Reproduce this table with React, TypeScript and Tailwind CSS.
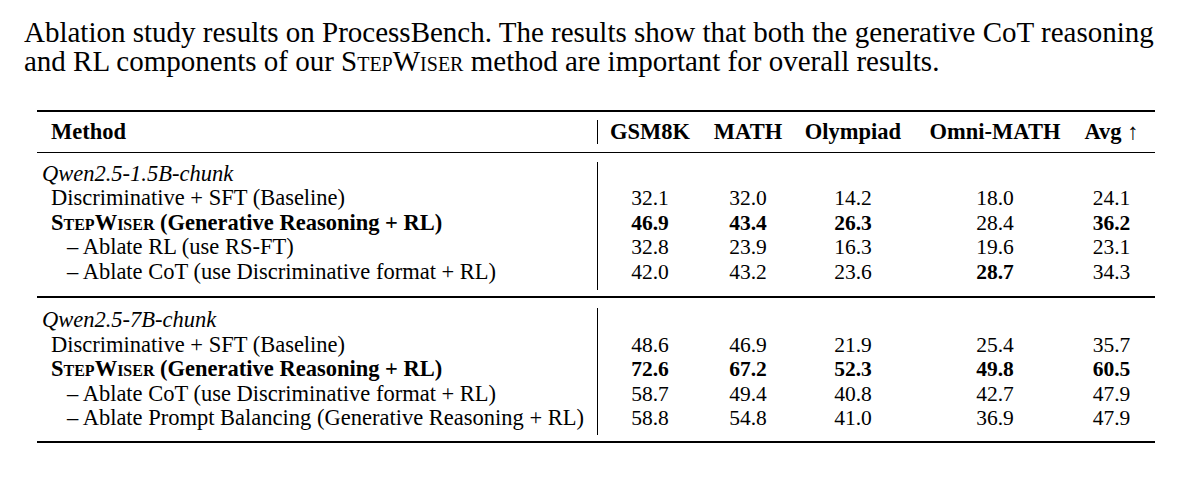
import type { ReactNode } from "react";

type Cell = { v: string; b?: boolean };

type Row = {
  label: ReactNode;
  kind: "group" | "base" | "sub";
  vals?: Cell[];
};

const n = (v: string, b = false): Cell => ({ v, b });

const StepWiser = () => (
  <span className="[font-variant:small-caps]">StepWiser</span>
);

const groups: Row[][] = [
  [
    { label: "Qwen2.5-1.5B-chunk", kind: "group" },
    {
      label: "Discriminative + SFT (Baseline)",
      kind: "base",
      vals: [n("32.1"), n("32.0"), n("14.2"), n("18.0"), n("24.1")],
    },
    {
      label: (
        <span className="font-bold">
          <StepWiser /> (Generative Reasoning + RL)
        </span>
      ),
      kind: "base",
      vals: [n("46.9", true), n("43.4", true), n("26.3", true), n("28.4"), n("36.2", true)],
    },
    {
      label: "– Ablate RL (use RS-FT)",
      kind: "sub",
      vals: [n("32.8"), n("23.9"), n("16.3"), n("19.6"), n("23.1")],
    },
    {
      label: "– Ablate CoT (use Discriminative format + RL)",
      kind: "sub",
      vals: [n("42.0"), n("43.2"), n("23.6"), n("28.7", true), n("34.3")],
    },
  ],
  [
    { label: "Qwen2.5-7B-chunk", kind: "group" },
    {
      label: "Discriminative + SFT (Baseline)",
      kind: "base",
      vals: [n("48.6"), n("46.9"), n("21.9"), n("25.4"), n("35.7")],
    },
    {
      label: (
        <span className="font-bold">
          <StepWiser /> (Generative Reasoning + RL)
        </span>
      ),
      kind: "base",
      vals: [n("72.6", true), n("67.2", true), n("52.3", true), n("49.8", true), n("60.5", true)],
    },
    {
      label: "– Ablate CoT (use Discriminative format + RL)",
      kind: "sub",
      vals: [n("58.7"), n("49.4"), n("40.8"), n("42.7"), n("47.9")],
    },
    {
      label: "– Ablate Prompt Balancing (Generative Reasoning + RL)",
      kind: "sub",
      vals: [n("58.8"), n("54.8"), n("41.0"), n("36.9"), n("47.9")],
    },
  ],
];

const cols = "grid grid-cols-[104px_92px_118px_166px_67px]";

const Group = ({ rows, first }: { rows: Row[]; first: boolean }) => (
  <div className={`flex ${first ? "pt-[8.5px]" : "pt-[10.5px]"} pb-[6px]`}>
    {/* method labels */}
    <div className="w-[560px] shrink-0 text-[22.5px]">
      {rows.map((r, i) => (
        <div
          key={i}
          className={`h-[24.5px] whitespace-nowrap ${
            r.kind === "group" ? "pl-[5px] italic" : r.kind === "base" ? "pl-[14px]" : "pl-[30px]"
          }`}
        >
          {r.label}
        </div>
      ))}
    </div>

    {/* scores */}
    <div className={`border-l-[1.5px] border-black text-[21.5px] ${first ? "pb-[6px]" : "pb-[4.5px]"}`}>
      {rows.map((r, i) => (
        <div key={i} className={`${cols} h-[24.5px]`}>
          {r.vals?.map((c, j) => (
            <div key={j} className={`text-center ${c.b ? "font-bold" : ""}`}>
              {c.v}
            </div>
          ))}
        </div>
      ))}
    </div>
  </div>
);

export default function App() {
  return (
    <div className="w-[1200px] h-[482px] bg-white text-black font-['Liberation_Serif',serif]">
      {/* Caption */}
      <p className="pt-[18px] pl-[24px] text-[29px] leading-[29px] whitespace-nowrap">
        Ablation study results on ProcessBench. The results show that both the generative CoT reasoning
        <br />
        and RL components of our <StepWiser /> method are important for overall results.
      </p>

      {/* Table */}
      <div className="ml-[37px] mt-[34px] w-[1118px] text-[22.5px] leading-[24.5px]">
        <div className="h-[2px] bg-black" />

        {/* Header */}
        <div className="flex py-[7.5px] font-bold">
          <div className="w-[560px] shrink-0 pl-[14px]">Method</div>
          <div className={`${cols} border-l-[1.5px] border-black`}>
            <div className="text-center">GSM8K</div>
            <div className="text-center">MATH</div>
            <div className="text-center">Olympiad</div>
            <div className="text-center">Omni-MATH</div>
            <div className="text-center whitespace-nowrap">
              Avg <span className="font-normal">↑</span>
            </div>
          </div>
        </div>

        <div className="h-[1.5px] bg-black" />
        <Group rows={groups[0]} first />
        <div className="h-[1.5px] bg-black" />
        <Group rows={groups[1]} first={false} />
        <div className="h-[2px] bg-black" />
      </div>
    </div>
  );
}
